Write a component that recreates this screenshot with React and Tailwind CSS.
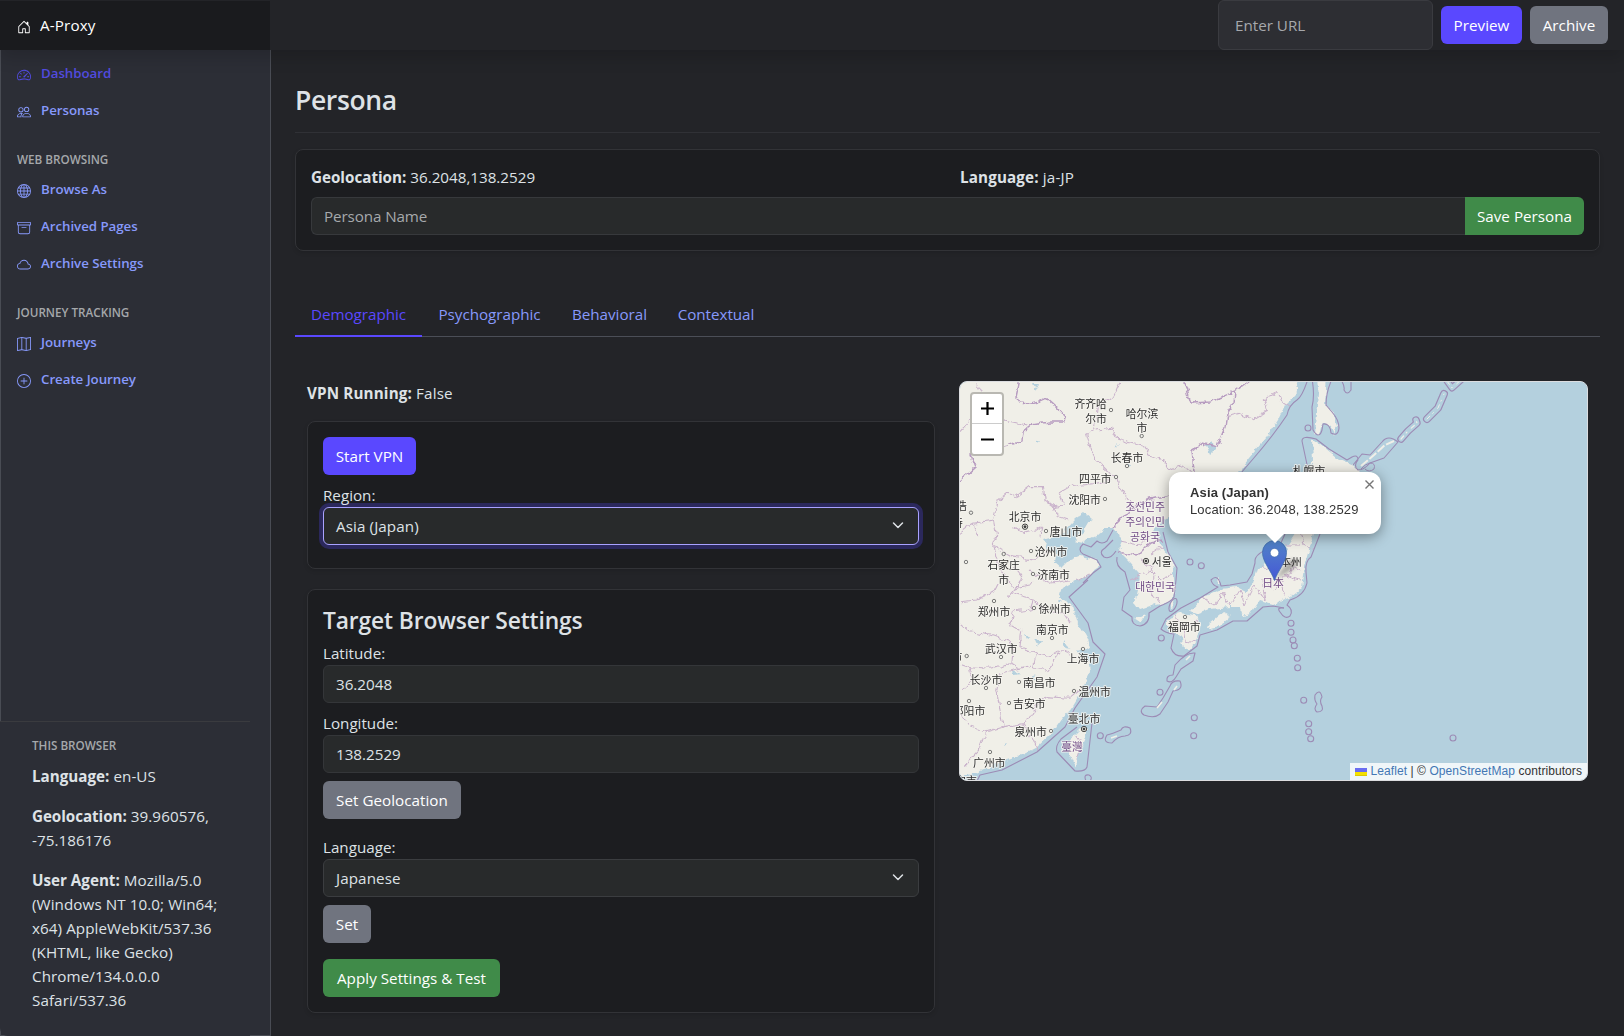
import React from "react";
import {
  BsHouseDoor,
  BsSpeedometer2,
  BsPeople,
  BsGlobe,
  BsArchive,
  BsCloud,
  BsMap,
  BsPlusCircle,
} from "react-icons/bs";

function NavItem({ icon: Icon, label, active }) {
  return (
    <a
      className={`flex h-[37px] items-center gap-[10px] pl-[16px] text-[13.3px] font-semibold tracking-[-0.04px] ${
        active ? "text-[#524bdf]" : "text-[#8799fb]"
      }`}
    >
      <Icon className="mt-[3px] h-[14px] w-[14px] shrink-0" />
      <span>{label}</span>
    </a>
  );
}

function NavHeading({ children }) {
  return (
    <h6 className="mb-[3px] mt-[22px] flex h-[17px] items-center pl-[16px] text-[11.7px] font-semibold tracking-[0px] text-[#a5a8ab]">
      {children}
    </h6>
  );
}

function Sidebar() {
  return (
    <aside className="flex w-[271px] shrink-0 flex-col border-x border-b border-[#494c54] bg-[#2c2e36]">
      <nav className="flex-1 pt-[5px]">
        <NavItem icon={BsSpeedometer2} label="Dashboard" active />
        <NavItem icon={BsPeople} label="Personas" />
        <NavHeading>WEB BROWSING</NavHeading>
        <NavItem icon={BsGlobe} label="Browse As" />
        <NavItem icon={BsArchive} label="Archived Pages" />
        <NavItem icon={BsCloud} label="Archive Settings" />
        <NavHeading>JOURNEY TRACKING</NavHeading>
        <NavItem icon={BsMap} label="Journeys" />
        <NavItem icon={BsPlusCircle} label="Create Journey" />
      </nav>
      <section className="-mb-px -ml-px h-[315px] w-[250px] rounded-bl-[8px] border-t border-[#3a3b3f] bg-[#2c2e36] pl-[32px] pt-[14px] text-[15.2px] leading-[24px] tracking-[0.08px] text-[#dee2e6]">
        <h6 className="text-[11.7px] font-semibold leading-[18px] tracking-[0px] text-[#a5a8ab]">THIS BROWSER</h6>
        <p className="mt-[10px]"><b className="tracking-[0px]">Language:</b> en-US</p>
        <p className="mt-[16px]"><b className="tracking-[-0.05px]">Geolocation:</b> 39.960576,<br />-75.186176</p>
        <p className="mt-[16px] whitespace-nowrap">
          <b className="tracking-[0px]">User Agent:</b> Mozilla/5.0<br />(Windows NT 10.0; Win64;<br />x64) AppleWebKit/537.36<br />
          (KHTML, like Gecko)<br />Chrome/134.0.0.0<br />Safari/537.36
        </p>
      </section>
    </aside>
  );
}

function Header() {
  return (
    <header className="relative z-10 flex h-[50px] bg-[#232428] shadow-[0_8px_16px_rgba(0,0,0,0.15)]">
      <div className="flex w-[271px] items-center gap-[9px] border-r border-t border-[#232428] bg-[#1a1b1e] pl-[17px] text-[15.2px] tracking-[0.15px] text-white">
        <BsHouseDoor className="mt-[3px] h-[14px] w-[14px]" />
        <span>A-Proxy</span>
      </div>
      <div className="flex flex-1 items-center justify-end gap-[8px] pr-[16px]">
        <div className="flex h-[50px] w-[215px] items-center rounded-[6px] border border-[#3a3b40] bg-[#2d2e33] pl-[16px] text-[15.2px] text-[#a6a8ac]">
          Enter URL
        </div>
        <Button className="w-[81px] bg-[#5a48ff]">Preview</Button>
        <Button className="w-[78px] bg-[#70747f]">Archive</Button>
      </div>
    </header>
  );
}

function Button({ className, children }) {
  return (
    <button className={`flex h-[38px] shrink-0 items-center justify-center whitespace-nowrap rounded-[6px] text-[15.2px] tracking-[0.03px] text-white ${className}`}>
      {children}
    </button>
  );
}

function Field({ label, children }) {
  return (
    <div>
      <div className="h-[24px] leading-[24px]">{label}</div>
      {children}
    </div>
  );
}

function TextBox({ value }) {
  return (
    <div className="flex h-[38px] items-center rounded-[6px] border border-[#343639] bg-[#282a2b] px-[12px]">
      {value}
    </div>
  );
}

function Select({ value, focused }) {
  return (
    <div
      className={`flex h-[38px] items-center justify-between rounded-[6px] border bg-[#282a2b] px-[12px] tracking-[0.1px] ${
        focused ? "border-[#a9a2ff] shadow-[0_0_0_4px_#2b285c]" : "border-[#3b3d40]"
      }`}
    >
      {value}
      <svg className="mr-[2px] h-[12px] w-[12px]" viewBox="0 0 16 16" fill="none" stroke="#dee2e6" strokeWidth="2" strokeLinecap="round" strokeLinejoin="round">
        <path d="m2 4 6 6 6-6" />
      </svg>
    </div>
  );
}

const places = [
  [1090.7, 404, "齐齐哈"], [1096, 418.7, "尔市"], [1142, 413.7, "哈尔滨"], [1142, 428, "市"],
  [1127, 458.3, "长春市"], [1095.3, 478.7, "四平市"], [1084.7, 499.7, "沈阳市"], [1025, 517, "北京市"],
  [1066, 532.3, "唐山市"], [1051, 551.7, "沧州市"], [1003.7, 565, "石家庄"], [1003.7, 579.5, "市"],
  [1053.7, 575.3, "济南市"], [1161.7, 562, "서울"], [961.5, 506, "浩"], [957.5, 523, "特"],
  [1291, 562, "本州"], [1309, 471, "札幌市"], [994, 611.7, "郑州市"], [1054.7, 609, "徐州市"],
  [1052.3, 630, "南京市"], [1001.3, 649, "武汉市"], [1083, 659.3, "上海市"], [986, 680, "长沙市"],
  [1039.3, 683.3, "南昌市"], [1094.7, 692.3, "温州市"], [1029.3, 704, "吉安市"], [969, 710.7, "邵阳市"],
  [1084, 718.7, "臺北市"], [1030.7, 732, "泉州市"], [989.3, 762.7, "广州市"], [1184.3, 627.3, "福岡市"],
  [957, 657, "市"], [966, 781, "宁市"],
];

const countries = [
  [1145, 507.3, "조선민주"], [1145, 522.3, "주의인민"], [1145, 536.7, "공화국"],
  [1155, 587.3, "대한민국"], [1273, 583.3, "日本"], [1072, 746.7, "臺灣"],
];

const towns = [
  [1111, 410], [1141.7, 436], [1127, 466], [1116, 477], [1105, 499], [1046, 531], [1031, 551], [1003.7, 554],
  [1033, 574], [966, 562], [971, 512.7], [994, 601], [1034, 608], [1052, 638], [1083, 649], [1001, 657],
  [966.7, 656], [986, 688], [1019, 682], [1074, 691], [969, 701], [1009, 703], [1051, 731], [990, 752], [1185, 617],
];

const capitals = [[1025, 526.7], [1146, 561], [1084, 729]];

const islets = [
  [1291, 623.3], [1291, 632.3], [1293, 640], [1294.3, 645.7], [1297.3, 658.3], [1297.7, 667.7], [1190, 562],
  [1201.3, 565.7], [1161.3, 638], [1303.7, 700.3], [1308.7, 723.7], [1308.7, 731.7], [1310.7, 738.7],
  [1453, 738], [1308, 428], [1194.3, 717.7], [1193.7, 735.7], [1160, 692.3], [1100.3, 735.7],
];

/* Thin island chain: territorial outline, surrounding water, then the land. */
function IslandChain({ d, width = 8, land = 1.6 }) {
  return (
    <g fill="none" strokeLinecap="round" strokeLinejoin="round">
      <path d={d} stroke="#9c8bb5" strokeWidth={width} />
      <path d={d} stroke="#b4d0de" strokeWidth={width - 2.4} />
      <path d={d} stroke="#f0efe8" strokeWidth={land} strokeDasharray="4 4 1 6" />
    </g>
  );
}

function MapArt() {
  return (
    <svg className="block h-full w-full" viewBox="959 381 629 400" preserveAspectRatio="none">
      <defs>
        <filter id="jag" x="-5%" y="-5%" width="110%" height="110%">
          <feTurbulence type="fractalNoise" baseFrequency="0.13" numOctaves="3" seed="4" result="n" />
          <feDisplacementMap in="SourceGraphic" in2="n" scale="7" xChannelSelector="R" yChannelSelector="G" />
        </filter>
        <linearGradient id="pin" x1="0" y1="0" x2="0" y2="1">
          <stop offset="0" stopColor="#5184c8" />
          <stop offset="1" stopColor="#4557d6" />
        </linearGradient>
        <filter id="soft"><feGaussianBlur stdDeviation="2" /></filter>
      </defs>
      <rect x="959" y="381" width="629" height="400" fill="#b4d0de" />

      <g filter="url(#jag)" fill="#f0efe8">
        <path d="M940 360H1301L1298 384 1295 395 1285 405 1278 420 1267 437 1250 457 1239 472 1222 492 1200 500 1180 508 1163 520 1153 531 1160 543 1172 560 1175 590 1171 602 1155 605 1140 610 1135 603 1138 590 1140 573 1130 562 1125 557 1118 550 1122 541 1113 528 1104 528 1095 536 1083 542 1074 540 1084 531 1091 519 1084 513 1074 520 1064 531 1050 538 1042 540 1048 548 1056 553 1055 562 1062 568 1070 560 1080 556 1096 560 1100 567 1090 574 1077 581 1060 590 1058 597 1072 605 1078 623 1088 640 1090 647 1077 651 1088 660 1090 672 1082 690 1072 707 1063 717 1050 735 1037 747 1017 757 993 765 977 772 940 780Z" />
        <path d="M1080 728 1088 730 1085 740 1079 753 1076 768 1071 757 1068 747 1073 735Z" />
        <path d="M1167 620 1178 613 1196 615 1200 625 1197 637 1190 651 1184 649 1182 638 1173 633 1167 627Z" />
        <path d="M1190 611 1203 597 1220 590 1237 588 1247 593 1253 582 1257 570 1267 562 1283 552 1297 530 1304 500 1322 500 1313 534 1308 553 1304 567 1301 588 1290 597 1273 604 1260 600 1250 614 1243 616 1240 607 1230 607 1210 609 1197 614Z" />
        <path d="M1209 623 1223 612 1231 616 1220 626 1208 628Z" />
        <path d="M1312 440 1323 446 1337 458 1353 465 1360 472 1340 490 1312 492 1308 476 1313 462Z" />
        <path d="M1316 374H1327L1325 405 1332 413 1337 425 1334 434 1330 425 1323 423 1320 436 1315 434 1316 425 1319 395Z" />
        <path d="M1216 580 1219 577 1219 583ZM1171 604 1175 599 1173 608ZM1135 618 1146 615 1141 622Z" />
      </g>

      <g filter="url(#jag)" fill="#b4d0de">
        <path d="M1033 384h6l-3 5zM1206 445l8-3 1 8-5 5zM1037 440l4-1-2 3zM1036 640l5 2-2 4-4-2zM1012 670l9 4-8 1zM1064 641l5 8-6-3zM1115 443l3 3-2 1zM1128 462l2 4-2 1zM1032 678l3-4 2 5zM1024 634l7 3-5 1zM1058 600l4 2-3 2zM1003 745l3-3 0 2z" />
      </g>

      <g fill="none" stroke="#c9b2cb" strokeWidth="1" filter="url(#jag)">
        <g transform="translate(950 370) scale(.3333)" strokeWidth="3.2">
          <path d="M510 40 495 75 470 90 445 110 440 150 430 180 410 190 425 240 440 270 470 300 500 320 510 350 530 380 545 405" />
          <path d="M440 180 485 175 500 205 540 215 580 225 600 255 640 270 655 300 700 285 725 305" />
          <path d="M830 140 870 130 910 150 950 125 940 90 980 65 995 95 1020 110" />
          <path d="M30 490 70 460 130 450 145 390 170 370 200 380 240 350 280 350 285 390 310 410 340 405 325 370 360 350 440 340 490 330" />
          <path d="M130 450 140 500 128 530 150 600 200 660M190 470 220 490 260 480 275 470 270 500M70 460 80 500M310 410 325 440 355 450" />
          <path d="M30 185 60 150 120 120 160 150 230 165M80 40 95 70M130 530 180 560 250 570 300 540M200 660 215 620 190 590" />
          <path d="M240 600 300 640 360 630" />
        </g>
        <g transform="translate(950 580) scale(.3333)" strokeWidth="3.2">
          <path d="M30 130 60 155 120 165 180 185 190 210 185 250 120 265 60 260 30 250M30 65 80 60 135 30 150 0" />
          <path d="M185 40 215 50 250 60 240 90 190 95 180 130 215 150 210 200 260 220 300 230 330 210 360 220M250 60 290 90 340 100 360 130" />
          <path d="M210 265 150 280 140 330 150 390 160 440 230 430 260 380 290 350 360 355 390 330M260 220 250 260 290 270 305 250 330 215" />
          <path d="M30 400 60 440 110 455 160 440M220 430 245 470 262 510M110 455 90 510 60 540 40 560M185 250 210 265 245 255M60 260 70 300 40 330M175 50 200 20 250 10" />
        </g>
        <path d="M1090 574 1077 581M1129 580 1150 570 1160 580 1172 575M1140 560 1155 572 1150 590 1160 603M1165 545 1150 555M1120 541 1140 545 1148 535M1075 735 1082 745 1077 760" />
        <path d="M1203 597 1215 605 1222 592 1230 606 1240 590 1245 605 1255 585 1265 600 1262 580 1275 590 1285 575 1300 580M1262 565 1275 572 1285 560 1300 570M1280 580 1285 597M1285 545 1300 545M1300 530 1303 545 1315 550M1175 615 1185 628 1198 622M1184 628 1186 640 1196 642M1295 560 1290 575" />
      </g>

      <g fill="none" stroke="#b79cc0" strokeWidth="1.5" filter="url(#jag)">
        <path d="M1020 379 1016 397 1020 403 1030 404 1038 402 1047 398 1055 405 1066 417 1065 422 1050 422 1032 425 1023 432 1022 440 1007 445 985 450 970 455 975 468 960 481" />
        <path d="M1184 379 1189 397 1191 403 1210 402 1234 392 1233 403 1227 413 1225 427 1217 447 1203 443 1192 450 1194 472M1234 392 1250 380" />
        <path d="M1113 527 1132 508 1147 500 1168 495M1118 552 1137 556 1150 543 1163 541" />
      </g>

      <g fill="none" stroke="#9c8bb5" strokeWidth="1.1" strokeLinejoin="round">
        <path d="M1308 379Q1302 397 1297 400 1289 405 1287 415 1273 436 1253 459L1241 473" />
        <path d="M1113 530 1107 541Q1102 545 1097 541L1091 547 1083 544Q1077 550 1083 554L1097 560 1101 567 1093 573 1083 583" />
        <path d="M1088 580 1069 597 1088 623 1093 642 1105 654 1097 677 1075 708 1065 727 1037 752 1002 770 980 775 977 781" />
        <path d="M1092 723 1087 767Q1085 772 1075 771L1057 752Q1055 746 1061 739L1077 727" />
        <path d="M1163 532 1168 552 1177 568 1176 580 1174 597Q1171 602 1160 606L1149 613Q1150 624 1140 626 1131 625 1132 617L1122 610 1124 597 1130 590 1125 572Q1115 566 1117 557" />
        <path d="M1116 551Q1110 560 1104 557 1098 552 1105 548L1113 540" />
        <path d="M1285 534 1280 545Q1253 552 1255 563L1252 574 1247 582 1230 585 1221 586Q1218 573 1211 580 1212 585 1218 587L1200 598 1181 608 1166 619 1161 629Q1165 633 1174 634L1171 648Q1174 657 1184 656L1197 646 1200 635 1217 630 1233 621 1247 621 1263 607 1273 606 1284 608" />
        <path d="M1320 534 1311 557Q1305 561 1306 572L1307 583Q1304 596 1290 600L1287 605Q1294 610 1290 616 1285 620 1280 612 1276 607 1284 608" />
        <path d="M1309 474 1302 441Q1302 435 1316 439L1329 449 1347 460 1352 457Q1358 454 1358 460 1353 466 1358 470 1364 470 1370 463L1384 458 1398 442Q1388 434 1382 442L1370 455 1362 454 1353 465" />
        <path d="M1312 379Q1315 395 1312 407L1313 430Q1319 440 1322 430L1323 424Q1330 423 1331 433 1338 437 1339 428 1339 420 1332 412L1326 405Q1326 392 1332 379" />
        <path d="M1341 380Q1345 386 1344 390 1347 396 1351 390V380" />
        <ellipse cx="1173" cy="605" rx="3.2" ry="7" transform="rotate(24 1173 605)" />
        <path d="M1195 653Q1186 652 1175 665L1173 675Q1166 675 1167 681 1172 684 1176 677L1181 669 1193 661Z" />
        <path d="M1180 681Q1172 680 1170 686L1163 698 1157 707 1145 706Q1138 711 1144 715 1154 719 1160 714L1168 702 1173 691Q1184 690 1180 681Z" />
        <path d="M1107 735Q1112 734 1121 730 1123 725 1130 728 1133 735 1125 736 1118 736 1112 743 1102 743 1107 735Z" />
        <path d="M1086 781Q1083 774 1089 775 1093 777 1090 781" />
        <path d="M1315 695Q1320 688 1322 697 1319 701 1322 706 1324 712 1317 712 1313 709 1317 704 1314 700 1315 695Z" />
        {islets.map(([x, y]) => (
          <circle key={`${x}-${y}`} cx={x} cy={y} r="3" />
        ))}
      </g>

      <IslandChain d="M1401 439 1408 431 1417 423 1416 420" width={7.5} land={1.2} />
      <IslandChain d="M1427 419 1438 408 1444 394" width={8} land={1} />
      <IslandChain d="M1447 381 1452 388 1462 379" width={7} land={1} />
      <path d="M1361 466 1374 455 1385 445 1394 441" fill="none" stroke="#f0efe8" strokeWidth="2" strokeDasharray="9 2" />
      <path d="M1190 656l-4 4M1157 708l5-6M1174 690l3-4M1111 738l6-2" stroke="#f0efe8" strokeWidth="1.6" />
      <path d="M1361 469q4-5 9-6 6 0 4 6-5 4-9 0" fill="none" stroke="#9c8bb5" />

      <g fill="#efefe8" stroke="#6d6d6d" strokeWidth=".9">
        {towns.map(([x, y]) => (
          <circle key={`${x}-${y}`} cx={x} cy={y} r="1.7" />
        ))}
        {capitals.map(([x, y]) => (
          <g key={x} stroke="#333">
            <circle cx={x} cy={y} r="2.7" />
            <circle cx={x} cy={y} r="1" fill="#333" />
          </g>
        ))}
      </g>

      <g
        className="font-['Noto_Sans_CJK_SC','Noto_Sans_CJK_KR',sans-serif] text-[10.8px]"
        textAnchor="middle"
        paintOrder="stroke"
        stroke="#f6f5f0"
        strokeOpacity=".8"
        strokeWidth="2"
        strokeLinejoin="round"
      >
        {places.map(([x, y, name]) => (
          <text key={`${x}-${y}`} x={x} y={y + 4} fill="#2d2d2d">{name}</text>
        ))}
        {countries.map(([x, y, name]) => (
          <text key={`${x}-${y}`} x={x} y={y + 4} fill="#704a86">{name}</text>
        ))}
      </g>

      <path d="M1275 580 1283 568Q1293 556 1297 560 1300 566 1286 573Z" fill="#000" opacity=".3" filter="url(#soft)" />
      <path d="M1274.500 580.500C1271.500 571 1262.500 562 1262.500 552.500A12 12 0 0 1 1286.500 552.500C1286.500 562 1277.500 571 1274.500 580.500Z" fill="url(#pin)" stroke="#3f6cab" strokeWidth=".8" />
      <circle cx="1274.500" cy="552.700" r="4.300" fill="#fff" stroke="#3d68a6" strokeWidth=".6" />
    </svg>
  );
}

function MapPanel() {
  return (
    <div className="relative h-[400px] w-[629px] overflow-hidden rounded-[8px] border border-[#dcdde0] bg-[#b4d0de] font-['Liberation_Sans',Arial,sans-serif] text-[#333]">
      <div className="-m-px h-[400px] w-[629px]">
        <MapArt />
      </div>
      <div className="absolute left-[10px] top-[10px] w-[34px] overflow-hidden rounded-[4px] border-2 border-[#b9b8b2] bg-white text-black">
        <div className="flex h-[30px] items-center justify-center border-b border-[#ccc]">
          <svg className="h-[13px] w-[13px]" viewBox="0 0 13 13" stroke="#000" strokeWidth="2.2"><path d="M0 6.500h13M6.500 0v13" /></svg>
        </div>
        <div className="flex h-[30px] items-center justify-center">
          <svg className="ml-[1px] h-[13px] w-[13px]" viewBox="0 0 13 13" stroke="#000" strokeWidth="2.2"><path d="M0 6.500h13" /></svg>
        </div>
      </div>
      <div className="absolute left-[209px] top-[90px] h-[62px] w-[212px] rounded-[12px] bg-white pl-[21px] pt-[12px] text-[13px] leading-[17px] tracking-[0.14px] shadow-[0_3px_14px_rgba(0,0,0,0.4)]">
        <div className="font-bold">Asia (Japan)</div>
        <div className="whitespace-nowrap">Location: 36.2048, 138.2529</div>
        <svg className="absolute right-[7px] top-[8px] h-[9px] w-[9px]" viewBox="0 0 9 9" stroke="#757575" strokeWidth="1.4"><path d="m.5.5 8 8M8.500.5l-8 8" /></svg>
        <svg className="absolute left-[96px] top-[61px] h-[10px] w-[20px]" viewBox="0 0 20 10"><path d="M0 0h20L10 10Z" fill="#fff" /></svg>
      </div>
      <div className="absolute bottom-0 right-0 flex h-[17px] items-center whitespace-nowrap bg-[#f0f6f9] pl-[5px] pr-[5px] text-[12px] leading-[17px] tracking-[0.07px]">
        <svg className="mr-[4px] h-[8px] w-[12px]" viewBox="0 0 12 8"><path fill="#6a6df0" d="M0 0h12v4H0z" /><path fill="#f5e000" d="M0 4h12v3H0z" /><path fill="#dccb00" d="M0 7h12v1H0z" /></svg>
        <span className="text-[#4377b4]">Leaflet</span>
        <span className="whitespace-pre"> | © </span>
        <span className="text-[#4377b4]">OpenStreetMap</span>
        <span className="whitespace-pre"> contributors</span>
      </div>
    </div>
  );
}

const card = "rounded-[8px] border border-[#323337] bg-[#1c1d20] shadow-[0_2px_4px_rgba(0,0,0,0.12)]";

function PersonaCard() {
  return (
    <section className={`mt-[16px] h-[102px] px-[15px] pt-[15px] ${card}`}>
      <div className="flex h-[32px] leading-[25px]">
        <p className="w-[649px]"><b>Geolocation:</b> 36.2048,138.2529</p>
        <p className="tracking-[0.15px]"><b>Language:</b> ja-JP</p>
      </div>
      <div className="flex">
        <div className="flex h-[38px] flex-1 items-center rounded-l-[6px] border border-r-0 border-[#37393c] bg-[#282a2b] pl-[12px] tracking-[-0.1px] text-[#a6a9ac]">
          Persona Name
        </div>
        <Button className="w-[119px] rounded-l-none bg-[#408b49]">Save Persona</Button>
      </div>
    </section>
  );
}

function Tabs() {
  return (
    <div className="mt-[44px] flex h-[42px] border-b border-[#4b4e57] tracking-[-0.02px] text-[#8799fb]">
      <div className="-mb-px flex w-[127px] justify-center border-b-2 border-[#5a48ff] leading-[39px] text-[#5a48ff]">Demographic</div>
      <div className="flex w-[135px] justify-center leading-[39px]">Psychographic</div>
      <div className="flex w-[105px] justify-center leading-[39px]">Behavioral</div>
      <div className="flex w-[108px] justify-center leading-[39px]">Contextual</div>
    </div>
  );
}

export default function App() {
  return (
    <div className="flex h-[1036px] w-[1624px] flex-col overflow-hidden bg-[#232428] font-['Open_Sans',sans-serif] text-[15.2px] text-[#dee2e6]">
      <Header />
      <div className="flex min-h-0 flex-1">
        <Sidebar />
        <main className="flex-1 pl-[24px] pr-[24px]">
          <h1 className="flex h-[83px] items-center border-b border-[#303136] pt-[19px] text-[26.5px] font-semibold tracking-[-0.35px]">Persona</h1>
          <PersonaCard />
          <Tabs />
          <div className="flex items-start gap-[24px] pl-[12px] pt-[44px]">
            <div className="w-[628px]">
              <p className="h-[40px] leading-[24px] tracking-[0.15px]"><b>VPN Running:</b> False</p>
              <section className={`h-[148px] px-[15px] pt-[15px] ${card}`}>
                <Button className="mb-[8px] w-[93px] bg-[#5a48ff]">Start VPN</Button>
                <Field label="Region:"><Select value="Asia (Japan)" focused /></Field>
              </section>
              <section className={`mt-[20px] h-[424px] px-[15px] pt-[15px] ${card}`}>
                <h2 className="h-[36px] text-[22.8px] font-semibold leading-[31px] tracking-[-0.12px]">Target Browser Settings</h2>
                <Field label="Latitude:"><TextBox value="36.2048" /></Field>
                <div className="h-[8px]" />
                <Field label="Longitude:"><TextBox value="138.2529" /></Field>
                <Button className="mb-[16px] mt-[8px] w-[138px] bg-[#70747f]">Set Geolocation</Button>
                <Field label="Language:"><Select value="Japanese" /></Field>
                <Button className="mb-[16px] mt-[8px] w-[48px] bg-[#70747f]">Set</Button>
                <Button className="w-[177px] bg-[#408b49]">Apply Settings &amp; Test</Button>
              </section>
            </div>
            <MapPanel />
          </div>
        </main>
      </div>
    </div>
  );
}
